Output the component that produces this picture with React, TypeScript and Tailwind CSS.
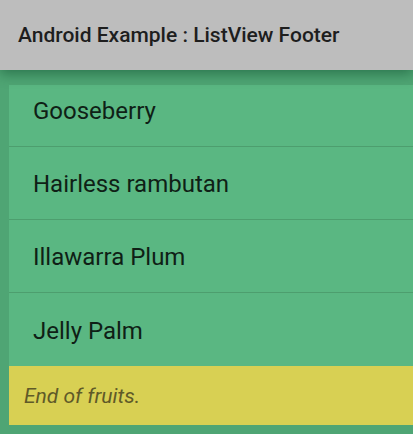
import React from 'react';

const fruits = ['Gooseberry', 'Hairless rambutan', 'Illawarra Plum', 'Jelly Palm'];

const App: React.FC = () => {
  return (
    <div className="w-[413px] h-[434px] overflow-hidden bg-[#4fa574] flex flex-col" style={{ fontFamily: 'Roboto, sans-serif' }}>
      <div className="h-[70px] shrink-0 bg-[#bdbdbd] flex items-center pl-[18px] relative z-10 shadow-[0_4px_12px_rgba(0,60,30,0.45)]">
        <span className="text-[21px] font-medium text-[#1e1e1e] pt-[1px]">Android Example : ListView Footer</span>
      </div>
      <div className="pl-[9px] pt-[15px] flex-1">
        <div className="h-[281px] overflow-hidden bg-[#5ab782]">
          <div className="mt-[-11px]">
            {fruits.map((f, i) => (
              <div
                key={f}
                className={`h-[73px] flex items-center pl-[24px] pt-[2px] text-[24px] text-[#0f1f16] ${i < fruits.length - 1 ? 'border-b border-[#4d9e6e]' : ''}`}
              >
                {f}
              </div>
            ))}
          </div>
        </div>
        <div className="h-[59px] bg-[#d8d053] flex items-center pl-[15px] pt-[2px]">
          <span className="italic text-[21px] text-[#5f5a28]">End of fruits.</span>
        </div>
      </div>
    </div>
  );
};

export default App;
